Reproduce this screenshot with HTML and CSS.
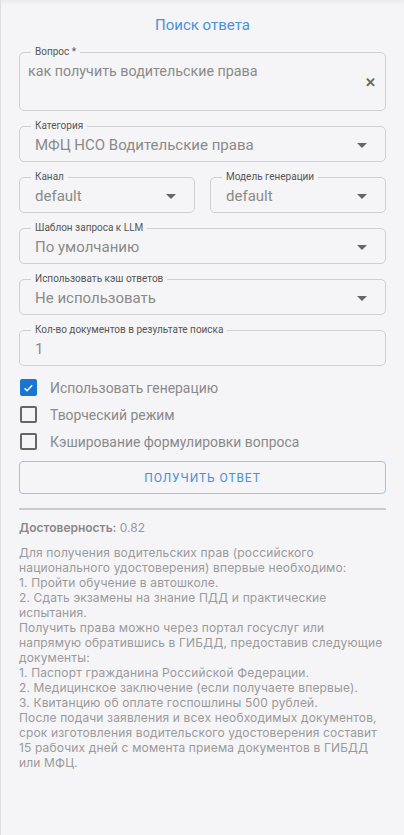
FILE: index.html
```html
<!DOCTYPE html>
<html lang="ru">
<head>
  <meta charset="UTF-8">
  <title>Поиск ответа</title>
  <meta name="viewport" content="width=device-width, initial-scale=1.0">
  <link rel="stylesheet" href="styles.css">
</head>
<body>
  <div class="panel">
    <h2 class="title">Поиск ответа</h2>

    <fieldset class="field field-question">
      <legend>Вопрос *</legend>
      <div class="question">
        <span>как получить водительские права</span>
        <span class="clear">&#x2715;</span>
      </div>
    </fieldset>

    <fieldset class="field">
      <legend>Категория</legend>
      <div class="value">МФЦ НСО Водительские права<span class="caret"></span></div>
    </fieldset>

    <div class="row">
      <fieldset class="field">
        <legend>Канал</legend>
        <div class="value">default<span class="caret"></span></div>
      </fieldset>
      <fieldset class="field">
        <legend>Модель генерации</legend>
        <div class="value">default<span class="caret"></span></div>
      </fieldset>
    </div>

    <fieldset class="field">
      <legend>Шаблон запроса к LLM</legend>
      <div class="value">По умолчанию<span class="caret"></span></div>
    </fieldset>

    <fieldset class="field">
      <legend>Использовать кэш ответов</legend>
      <div class="value">Не использовать<span class="caret"></span></div>
    </fieldset>

    <fieldset class="field">
      <legend>Кол-во документов в результате поиска</legend>
      <div class="value">1</div>
    </fieldset>

    <div class="checks">
      <label class="check"><span class="box checked">
        <svg viewBox="0 0 16 16" width="16" height="16"><path d="M3.2 8.3l3 3 6.4-6.6" fill="none" stroke="#fff" stroke-width="1.8"/></svg>
      </span>Использовать генерацию</label>
      <label class="check"><span class="box"></span>Творческий режим</label>
      <label class="check"><span class="box"></span>Кэширование формулировки вопроса</label>
    </div>

    <button class="submit">Получить ответ</button>

    <hr class="divider">

    <p class="score"><b>Достоверность:</b> 0.82</p>

    <p class="answer">Для получения водительских прав (российского национального удостоверения) впервые необходимо:
1. Пройти обучение в автошколе.
2. Сдать экзамены на знание ПДД и практические испытания.
Получить права можно через портал госуслуг или напрямую обратившись в ГИБДД, предоставив следующие документы:
1. Паспорт гражданина Российской Федерации.
2. Медицинское заключение (если получаете впервые).
3. Квитанцию об оплате госпошлины 500 рублей.
После подачи заявления и всех необходимых документов, срок изготовления водительского удостоверения составит 15 рабочих дней с момента приема документов в ГИБДД или МФЦ.</p>
  </div>
</body>
</html>
```

FILE: styles.css
```css
body {
  margin: 0;
  background: #f5f5f7;
  font-family: Roboto, 'Liberation Sans', sans-serif;
  color: #8a8a8a;
}

.panel {
  min-height: 835px;
  box-sizing: border-box;
  padding: 16px 18px 20px;
  border-left: 1px solid #dedede;
  background: linear-gradient(to bottom, #ececee 0, #f5f5f7 6px);
}

.title {
  margin: 0 0 12px;
  text-align: center;
  font-size: 15px;
  line-height: 18px;
  font-weight: 400;
  color: #4a90d9;
}

.field {
  margin: 9px 0 0;
  padding: 0;
  border: 1px solid #cfcfcf;
  border-radius: 5px;
  min-width: 0;
}

.field-question {
  margin-top: 0;
}

.field legend {
  margin-left: 11px;
  padding: 0 4px;
  font-size: 10px;
  line-height: 12px;
  color: #555;
}

.value {
  height: 29px;
  box-sizing: border-box;
  display: flex;
  align-items: center;
  justify-content: space-between;
  padding: 0 18px 3px 15px;
  font-size: 15px;
}

.caret {
  width: 0;
  height: 0;
  border-left: 5px solid transparent;
  border-right: 5px solid transparent;
  border-top: 5px solid #666;
}

.question {
  height: 52px;
  position: relative;
  box-sizing: border-box;
  padding: 6px 8px 0;
  font-size: 14.3px;
  line-height: 14px;
}

.clear {
  position: absolute;
  right: 9px;
  top: 18px;
  font-size: 13px;
  font-weight: bold;
  color: #666;
}

.row {
  display: grid;
  grid-template-columns: 1fr 1fr;
  column-gap: 15px;
}

.checks {
  margin-top: 13px;
  display: flex;
  flex-direction: column;
  gap: 10px;
}

.check {
  display: flex;
  align-items: center;
  gap: 13px;
  height: 17px;
  font-size: 13.9px;
  padding-left: 1px;
}

.box {
  width: 17px;
  height: 17px;
  box-sizing: border-box;
  border: 2px solid #666;
  border-radius: 2px;
  display: flex;
  align-items: center;
  justify-content: center;
}

.box.checked {
  background: #1976d2;
  border-color: #1976d2;
}

.submit {
  display: block;
  width: 100%;
  height: 33px;
  margin-top: 11px;
  background: transparent;
  border: 1px solid #9cc2ea;
  border-radius: 4px;
  color: #4a8fd8;
  font-family: Roboto, sans-serif;
  font-size: 12px;
  font-weight: 400;
  letter-spacing: 0.9px;
  text-transform: uppercase;
}

.divider {
  margin: 14px 0 0;
  border: none;
  border-top: 2px solid #cbcbcb;
}

.score {
  margin: 10px 0 0;
  font-family: Inter, sans-serif;
  font-size: 12px;
  line-height: 15px;
  color: #999;
}

.score b {
  font-weight: 600;
  color: #888;
}

.answer {
  margin: 10px 0 0;
  white-space: pre-line;
  font-family: Inter, sans-serif;
  font-size: 12px;
  line-height: 15px;
  letter-spacing: 0.15px;
  color: #9a9a9a;
}
```
